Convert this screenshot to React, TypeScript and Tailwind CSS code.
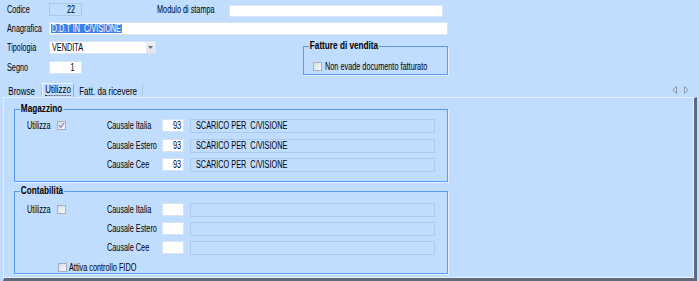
import React from "react";

const T = ({
  children,
  v = "l",
  className = "",
}: {
  children: React.ReactNode;
  v?: "l" | "r" | "b" | "c";
  className?: string;
}) => {
  const cls =
    v === "r"
      ? "origin-right scale-x-[0.73]"
      : v === "b"
      ? "origin-left font-bold scale-x-[0.82]"
      : v === "c"
      ? "origin-center scale-x-[0.8]"
      : "origin-left scale-x-[0.73]";
  return <span className={"inline-block whitespace-pre " + cls + " " + className}>{children}</span>;
};

const Check = ({ checked }: { checked?: boolean }) => (
  <div className="w-[9px] h-[9px] border border-[#a6aeb9] bg-linear-to-br from-[#d9dde3] to-[#f8f9fb] flex items-center justify-center shrink-0">
    {checked && (
      <svg width="7" height="7" viewBox="0 0 7 7">
        <path d="M1 3.3 L2.8 5.3 L6 1" fill="none" stroke="#6f82a3" strokeWidth="1.1" />
      </svg>
    )}
  </div>
);

const Group = ({
  title,
  className,
  children,
}: {
  title: string;
  className: string;
  children?: React.ReactNode;
}) => (
  <div className={"relative shrink-0 border border-[#5b9af0] shadow-[1px_1px_0_#e4efff] " + className}>
    <span className="absolute left-[5px] top-[-7px] leading-[12px] text-[10px] whitespace-nowrap">
      <T v="b" className="bg-[#c0dcfe] px-[1px]">{title}</T>
    </span>
    {children}
  </div>
);

const CausaleRow = ({
  first,
  label,
  code,
  desc,
  checked,
  className,
}: {
  first?: boolean;
  label: string;
  code: string;
  desc: string;
  checked?: boolean;
  className: string;
}) => (
  <div className={"flex items-center h-[13px] pl-[12px] " + className}>
    <div className="w-[80px] shrink-0 flex items-center">
      {first && (
        <>
          <span className="w-[30px] shrink-0">
            <T>Utilizza</T>
          </span>
          <Check checked={checked} />
        </>
      )}
    </div>
    <span className="w-[55px] shrink-0">
      <T>{label}</T>
    </span>
    <div className="w-[22px] h-[13px] shrink-0 bg-white border border-[#d6e3f3] text-right pr-[2px] leading-[11px]">
      <T v="r">{code}</T>
    </div>
    <div className="ml-[6px] w-[245px] h-[14px] shrink-0 border border-[#adc9ee] pl-[5px] leading-[12px]">
      <T>{desc}</T>
    </div>
  </div>
);

export default function App() {
  return (
    <div className="w-[699px] h-[281px] overflow-hidden text-[10px] text-black bg-[#c0dcfe] font-['Liberation_Sans',Arial,sans-serif]">
      {/* Row 1 */}
      <div className="flex items-center h-[13px] mt-[3px]">
        <span className="ml-[7px] w-[42px] shrink-0">
          <T>Codice</T>
        </span>
        <div className="w-[33px] h-[13px] shrink-0 border border-[#abc7ec] text-right pr-[6px] leading-[11px]">
          <T v="r">22</T>
        </div>
        <span className="ml-[75px] w-[72px] shrink-0">
          <T>Modulo di stampa</T>
        </span>
        <div className="w-[214px] h-[12px] mt-[2px] shrink-0 bg-white border border-[#d8e5f5]" />
      </div>
      {/* Row 2 */}
      <div className="flex items-center h-[13px] mt-[6px]">
        <span className="ml-[7px] w-[42px] shrink-0">
          <T>Anagrafica</T>
        </span>
        <div className="w-[399px] h-[13px] shrink-0 bg-white border border-[#d8e5f5] flex items-center pl-[1px]">
          <T className="bg-[#3c7fe6] text-white leading-[9px] h-[9px] px-[1px]">D.D.T IN  C/VISIONE</T>
        </div>
      </div>
      {/* Rows 3-4 + group */}
      <div className="flex">
        <div className="w-[296px] shrink-0">
          <div className="flex items-center h-[13px] mt-[6px]">
            <span className="ml-[7px] w-[42px] shrink-0">
              <T>Tipologia</T>
            </span>
            <div className="w-[107px] h-[13px] shrink-0 bg-white border border-[#d8e5f5] flex items-center pl-[2px]">
              <span className="flex-1 leading-[11px]">
                <T>VENDITA</T>
              </span>
              <div className="w-[9px] h-[11px] bg-linear-to-b from-[#eef1f5] to-[#dfe4ea] flex items-center justify-center">
                <svg width="5" height="3" viewBox="0 0 5 3">
                  <path d="M0 0 L5 0 L2.5 3 Z" fill="#6b7280" />
                </svg>
              </div>
            </div>
          </div>
          <div className="flex items-center h-[13px] mt-[7px]">
            <span className="ml-[7px] w-[42px] shrink-0">
              <T>Segno</T>
            </span>
            <div className="w-[33px] h-[13px] shrink-0 bg-white border border-[#d8e5f5] text-right pr-[6px] leading-[11px]">
              <T v="r">1</T>
            </div>
          </div>
        </div>
        <Group title="Fatture di vendita" className="ml-[7px] mt-[11px] w-[145px] h-[29px]">
          <div className="flex items-center mt-[12px] ml-[9px]">
            <Check />
            <span className="ml-[3px]">
              <T>Non evade documento fatturato</T>
            </span>
          </div>
        </Group>
      </div>

      {/* Tabs */}
      <div className="flex items-end h-[14px] mt-[8px] pl-[3px] pr-[10px]">
        <div className="w-[39px] h-[12px] shrink-0 flex items-center justify-center border-r border-[#a9c3e3]">
          <T v="c">Browse</T>
        </div>
        <div className="w-[32px] h-[14px] shrink-0 flex items-center justify-center border-l border-t border-[#eef5ff] border-r border-r-[#93aed0]">
          <T v="c" className="border-b border-dotted border-[#333] leading-[10px]">Utilizzo</T>
        </div>
        <div className="w-[69px] h-[12px] shrink-0 flex items-center justify-center border-r border-[#a9c3e3]">
          <T v="c">Fatt. da ricevere</T>
        </div>
        <div className="flex-1" />
        <div className="flex items-center gap-[7px] mb-[3px]">
          <svg width="5" height="8" viewBox="0 0 5 8">
            <path d="M4.5 0.5 L0.8 4 L4.5 7.5 Z" fill="none" stroke="#8d9aab" strokeWidth="1" />
          </svg>
          <svg width="5" height="8" viewBox="0 0 5 8">
            <path d="M0.5 0.5 L4.2 4 L0.5 7.5 Z" fill="none" stroke="#8d9aab" strokeWidth="1" />
          </svg>
        </div>
      </div>

      {/* Tab panel */}
      <div className="ml-[3px] w-[694px] h-[184px] border-l border-t border-[#e3eefd] border-r-[3px] border-r-[#5f6a78] border-b-[3px] border-b-[#5f6a78] shadow-[inset_-1px_-1px_0_#e8f1fe]">
        <Group title="Magazzino" className="ml-[10px] mt-[11px] w-[434px] h-[73px]">
          <CausaleRow first checked label="Causale Italia" code="93" desc="SCARICO PER  C/VISIONE" className="mt-[9px]" />
          <CausaleRow label="Causale Estero" code="93" desc="SCARICO PER  C/VISIONE" className="mt-[7px]" />
          <CausaleRow label="Causale Cee" code="93" desc="SCARICO PER  C/VISIONE" className="mt-[6px]" />
        </Group>
        <Group title="Contabilità" className="ml-[10px] mt-[9px] w-[434px] h-[83px]">
          <CausaleRow first label="Causale Italia" code="" desc="" className="mt-[11px]" />
          <CausaleRow label="Causale Estero" code="" desc="" className="mt-[6px]" />
          <CausaleRow label="Causale Cee" code="" desc="" className="mt-[6px]" />
          <div className="flex items-center ml-[43px] mt-[6px]">
            <Check />
            <span className="ml-[2px]">
              <T>Attiva controllo FIDO</T>
            </span>
          </div>
        </Group>
      </div>
    </div>
  );
}
